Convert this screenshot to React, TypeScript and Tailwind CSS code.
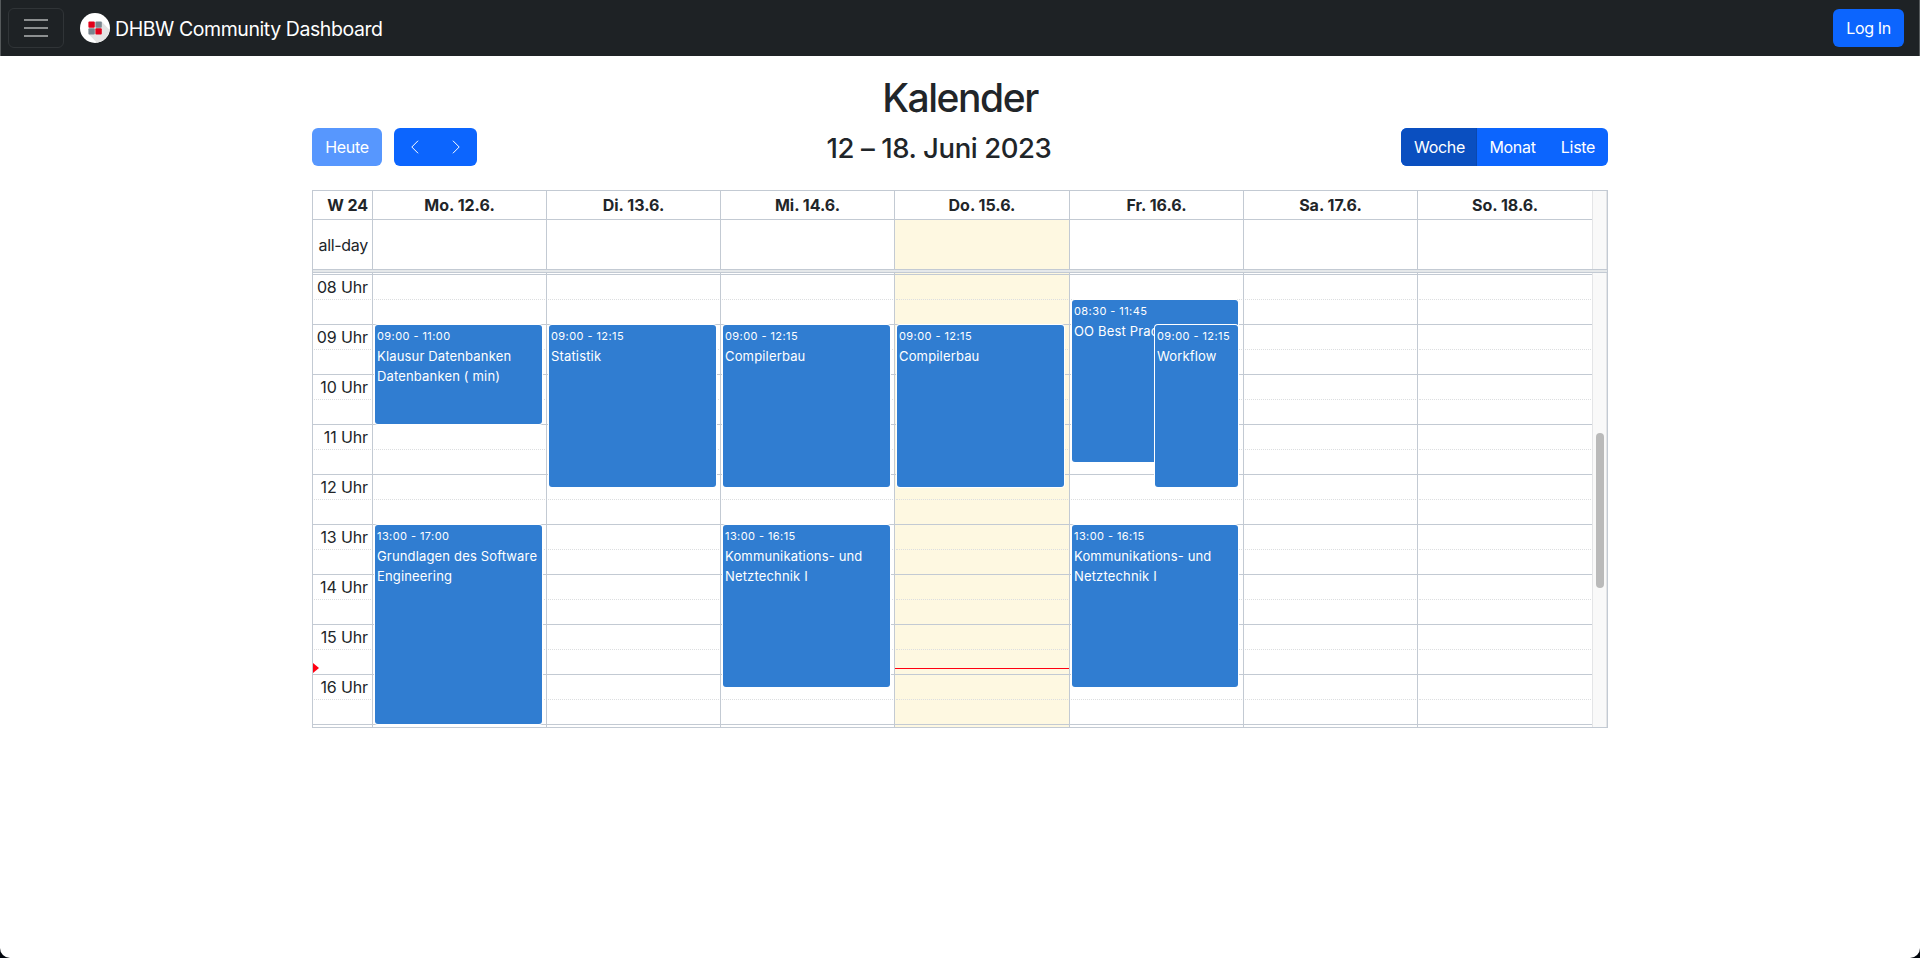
import React from "react";

type CalendarEvent = { time: string; title: string; box: string };
type Day = { label: string; width: string; today?: boolean; events: CalendarEvent[] };

const days: Day[] = [
  {
    label: "Mo. 12.6.",
    width: "w-[174px]",
    events: [
      { time: "09:00 - 11:00", title: "Klausur Datenbanken Datenbanken ( min)", box: "left-[2px] w-[167px] top-[52px] h-[99px]" },
      { time: "13:00 - 17:00", title: "Grundlagen des Software Engineering", box: "left-[2px] w-[167px] top-[252px] h-[199px]" },
    ],
  },
  {
    label: "Di. 13.6.",
    width: "w-[174px]",
    events: [{ time: "09:00 - 12:15", title: "Statistik", box: "left-[2px] w-[167px] top-[52px] h-[162px]" }],
  },
  {
    label: "Mi. 14.6.",
    width: "w-[174px]",
    events: [
      { time: "09:00 - 12:15", title: "Compilerbau", box: "left-[2px] w-[167px] top-[52px] h-[162px]" },
      { time: "13:00 - 16:15", title: "Kommunikations- und Netztechnik I", box: "left-[2px] w-[167px] top-[252px] h-[162px]" },
    ],
  },
  {
    label: "Do. 15.6.",
    width: "w-[175px]",
    today: true,
    events: [{ time: "09:00 - 12:15", title: "Compilerbau", box: "left-[2px] w-[167px] top-[52px] h-[162px]" }],
  },
  {
    label: "Fr. 16.6.",
    width: "w-[174px]",
    events: [
      { time: "08:30 - 11:45", title: "OO Best Practices", box: "left-[2px] w-[166px] top-[27px] h-[162px]" },
      { time: "09:00 - 12:15", title: "Workflow", box: "left-[85px] w-[83px] top-[52px] h-[162px]" },
      { time: "13:00 - 16:15", title: "Kommunikations- und Netztechnik I", box: "left-[2px] w-[166px] top-[252px] h-[162px]" },
    ],
  },
  { label: "Sa. 17.6.", width: "w-[174px]", events: [] },
  { label: "So. 18.6.", width: "w-[175px]", events: [] },
];

const hours = ["08", "09", "10", "11", "12", "13", "14", "15", "16"];

function Logo() {
  return (
    <svg className="h-[30px] w-[30px]" viewBox="0 0 30 30">
      <circle cx="15" cy="15" r="15" fill="#fff" />
      <path d="M21.6 8.6 L29.6 17 A15 15 0 0 1 17 29.8 L8.6 21.3 Z" fill="#e3e3e3" />
      <rect x="8.4" y="8.6" width="6.4" height="6.2" rx="1" fill="#e2001a" />
      <rect x="15.4" y="8.6" width="6.4" height="6.2" rx="1" fill="#7a868f" />
      <rect x="8.4" y="15.2" width="6.4" height="6.2" rx="1" fill="#7a868f" />
      <rect x="15.4" y="15.2" width="6.4" height="6.2" rx="1" fill="#e2001a" />
    </svg>
  );
}

function Navbar() {
  return (
    <nav className="flex h-[56px] items-center justify-between border-x border-[#55595b] bg-[#1e2225] pl-[7px] pr-[15px]">
      <div className="flex items-center">
        <button className="flex h-[40px] w-[56px] items-center justify-center rounded-md border border-[#303437]">
          <svg className="h-[30px] w-[30px]" viewBox="0 0 30 30" fill="none" stroke="#8c8f90" strokeWidth="2">
            <path d="M3 7h24M3 15h24M3 23h24" />
          </svg>
        </button>
        <a className="ml-4 flex items-center gap-[5px] text-white">
          <Logo />
          <span className="pt-[2px] text-[19.5px] leading-[30px] tracking-[-0.42px]">DHBW Community Dashboard</span>
        </a>
      </div>
      <button className="h-[38px] w-[71px] rounded-md bg-[#0c65fe] text-[16px] tracking-[-0.35px] text-white">Log In</button>
    </nav>
  );
}

function Chevron({ d }: { d: string }) {
  return (
    <svg className="h-4 w-4" viewBox="0 0 16 16" fill="none" stroke="#fff" strokeLinecap="round" strokeLinejoin="round">
      <path d={d} />
    </svg>
  );
}

function Toolbar() {
  return (
    <div className="flex h-[38px] items-center justify-between text-[16px] tracking-[-0.3px] text-white">
      <div className="flex gap-[12px]">
        <button className="h-[38px] w-[70px] rounded-md bg-[#5797fe]">Heute</button>
        <div className="flex h-[38px] w-[83px] items-center justify-between rounded-md bg-[#0c65fe] pl-[13px] pr-[13px]">
          <Chevron d="M10.8 2 L4.8 8 L10.8 14" />
          <Chevron d="M5.2 2 L11.2 8 L5.2 14" />
        </div>
      </div>
      <h2 className="pt-[2px] text-[27.5px] font-medium leading-[34px] tracking-[-0.42px] text-[#212529]">12 – 18. Juni 2023</h2>
      <div className="flex h-[38px] overflow-hidden rounded-md bg-[#0c65fe]">
        <button className="w-[76px] border-r border-[#0a48b0] bg-[#0a4fc0] pl-[2px]">Woche</button>
        <button className="w-[71px]">Monat</button>
        <button className="w-[60px]">Liste</button>
      </div>
    </div>
  );
}

function EventBox({ event }: { event: CalendarEvent }) {
  return (
    <div className={`absolute overflow-hidden rounded-[3px] bg-[#307dd1] px-[2px] pt-[3px] text-white shadow-[0_0_0_1px_#fff] ${event.box}`}>
      <div className="whitespace-nowrap text-[11px] leading-[16px] tracking-[0.42px]">{event.time}</div>
      <div className="mt-[2px] text-[13px] leading-[20px] tracking-[0.16px]">{event.title}</div>
    </div>
  );
}

function Slots() {
  return (
    <div className="pt-[1px]">
      {hours.map((h) => (
        <div key={h} className="h-[50px] border-t border-[#c3cad3] px-px pt-[24px]">
          <div className="border-t border-dotted border-[#dcdee0]" />
        </div>
      ))}
      <div className="border-t border-[#c3cad3]" />
    </div>
  );
}

function DayColumn({ day }: { day: Day }) {
  return (
    <div className={`relative h-[454px] border-l border-[#c3cad3] ${day.width} ${day.today ? "bg-[#fef8e1]" : ""}`}>
      <Slots />
      {day.events.map((e) => (
        <EventBox key={e.time + e.title} event={e} />
      ))}
      {day.today && <div className="absolute left-0 right-0 top-[395px] h-px bg-[#ff0012]" />}
    </div>
  );
}

function Calendar() {
  return (
    <div className="mt-[24px] h-[538px] w-[1296px] border border-[#c3cad3] text-[16px] text-[#212529]">
      <div className="flex h-[78px]">
        <div className="w-[59px] text-right">
          <div className="h-[29px] border-b border-[#c3cad3] pr-[4px] font-bold leading-[28px] tracking-[-0.1px]">W 24</div>
          <div className="h-[49px] pr-[4px] leading-[50px] tracking-[-0.3px]">all-day</div>
        </div>
        {days.map((day) => (
          <div key={day.label} className={`border-l border-[#c3cad3] ${day.width}`}>
            <div className="h-[29px] border-b border-[#c3cad3] text-center font-bold leading-[28px]">{day.label}</div>
            <div className={day.today ? "h-[49px] bg-[#fef8e1]" : "h-[49px]"} />
          </div>
        ))}
        <div className="w-[15px] border-x border-[#e4e5e7] bg-[#f9f9f9]" />
      </div>
      <div className="h-[4px] border-y border-[#c3cad3] bg-[#e5e8ea]" />
      <div className="flex h-[454px]">
        <div className="relative w-[59px] pt-px">
          {hours.map((h) => (
            <div key={h} className="h-[50px] border-t border-[#c3cad3]">
              <div className="h-[24px] pr-[4px] text-right leading-[25px] tracking-[-0.13px]">{h} Uhr</div>
              <div className="mx-px border-t border-dotted border-[#dcdee0]" />
            </div>
          ))}
          <div className="border-t border-[#c3cad3]" />
          <div className="absolute left-0 top-[390px] h-0 w-0 border-y-[5px] border-l-[6px] border-y-transparent border-l-[#ff0012]" />
        </div>
        {days.map((day) => (
          <DayColumn key={day.label} day={day} />
        ))}
        <div className="w-[15px] border-x border-[#e4e5e7] bg-[#f9f9f9] pl-[3px] pt-[160px]">
          <div className="h-[155px] w-[8px] rounded-full bg-[#bababa]" />
        </div>
      </div>
    </div>
  );
}

export default function App() {
  return (
    <div className="h-[958px] w-[1920px] overflow-hidden bg-[#02060d]">
      <div className="h-full rounded-b-[10px] bg-white font-['Inter',sans-serif]">
        <Navbar />
        <main className="mx-auto w-[1296px] pt-[17px]">
          <h1 className="h-[55px] text-center text-[39px] font-medium leading-[49px] tracking-[-1.45px] text-[#212529]">Kalender</h1>
          <Toolbar />
          <Calendar />
        </main>
      </div>
    </div>
  );
}
